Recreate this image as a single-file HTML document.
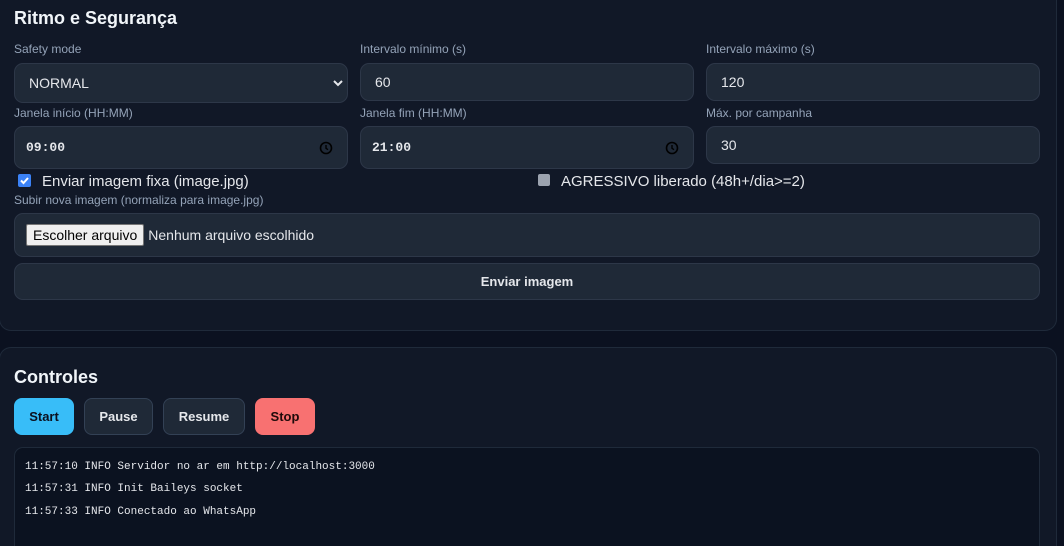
<!DOCTYPE html>
<html style="width:1064px;height:546px;overflow:hidden"><head><meta charset="utf-8"><style>
*{box-sizing:border-box;margin:0;padding:0}
body{width:1064px;height:546px;overflow:hidden;background:#0b1120;font-family:"Liberation Sans",sans-serif;color:#e5e7eb;position:relative}
.card{position:absolute;left:-1px;width:1058px;background:#111827;border:1px solid #1f2a3a;border-radius:12px}
.a{position:absolute}
.lbl{font-size:12px;color:#94a3b8}
.inp{position:absolute;background:#1f2937;border:1px solid #2d3748;border-radius:9px;font-size:14px;color:#e5e7eb;display:flex;align-items:center;padding-left:14px}
h2{position:absolute;font-size:18px;font-weight:bold;color:#f1f5f9}
.btn{position:absolute;top:398px;height:37px;border-radius:8px;font-size:13px;font-weight:bold;display:flex;align-items:center;justify-content:center;background:#1f2937;border:1px solid #334155;color:#e5e7eb}
.log{font-family:"Liberation Mono","DejaVu Sans Mono",monospace;font-size:11px;color:#e5e7eb}
</style></head><body>
<div class="card" style="top:-20px;height:351px"></div>
<div class="card" style="top:347px;height:199px;border-bottom:none;border-bottom-left-radius:0;border-bottom-right-radius:0"></div>
<h2 style="left:14px;top:8px">Ritmo e Segurança</h2>
<div class="a lbl" style="left:14px;top:42px">Safety mode</div>
<div class="a lbl" style="left:360px;top:42px">Intervalo mínimo (s)</div>
<div class="a lbl" style="left:706px;top:42px">Intervalo máximo (s)</div>
<div class="inp" style="left:14px;top:63px;width:334px;height:40px">NORMAL
<svg class="a" style="right:4px;top:15px" width="10" height="8" viewBox="0 0 10 8"><path d="M1 2l4 4 4-4" stroke="#e5e7eb" stroke-width="2" fill="none"/></svg></div>
<div class="inp" style="left:360px;top:63px;width:334px;height:38px">60</div>
<div class="inp" style="left:706px;top:63px;width:334px;height:38px">120</div>
<div class="a lbl" style="left:14px;top:106px">Janela início (HH:MM)</div>
<div class="a lbl" style="left:360px;top:106px">Janela fim (HH:MM)</div>
<div class="a lbl" style="left:706px;top:106px">Máx. por campanha</div>
<div class="inp log" style="left:14px;top:126px;width:334px;height:43px;font-size:13px;font-weight:bold;padding-left:11px">09:00
<svg class="a" style="right:14px;top:14px" width="14" height="14" viewBox="0 0 14 14"><circle cx="7" cy="7" r="5.5" stroke="#000" stroke-width="1.6" fill="none"/><path d="M7 4v3.3l2 1.4" stroke="#000" stroke-width="1.4" fill="none"/></svg></div>
<div class="inp log" style="left:360px;top:126px;width:334px;height:43px;font-size:13px;font-weight:bold;padding-left:11px">21:00
<svg class="a" style="right:14px;top:14px" width="14" height="14" viewBox="0 0 14 14"><circle cx="7" cy="7" r="5.5" stroke="#000" stroke-width="1.6" fill="none"/><path d="M7 4v3.3l2 1.4" stroke="#000" stroke-width="1.4" fill="none"/></svg></div>
<div class="inp" style="left:706px;top:126px;width:334px;height:38px">30</div>
<div class="a" style="left:18px;top:174px;width:13px;height:13px;background:#3b82f6;border-radius:2px"><svg width="13" height="13" viewBox="0 0 13 13"><path d="M3 6.5l2.5 2.5 4.5-5" stroke="#fff" stroke-width="2" fill="none"/></svg></div>
<div class="a" style="left:42px;top:173px;font-size:15px;color:#e5e7eb">Enviar imagem fixa (image.jpg)</div>
<div class="a" style="left:538px;top:174px;width:12px;height:12px;background:#9ca3af;border-radius:2px"></div>
<div class="a" style="left:561px;top:173px;font-size:15px;color:#e5e7eb">AGRESSIVO liberado (48h+/dia>=2)</div>
<div class="a lbl" style="left:14px;top:193px">Subir nova imagem (normaliza para image.jpg)</div>
<div class="inp" style="left:14px;top:213px;width:1026px;height:44px;padding-left:11px"><span style="background:#efefef;color:#000;border:1px solid #767676;border-radius:2px;padding:2px 6px;font-size:14px;margin-right:4px">Escolher arquivo</span>Nenhum arquivo escolhido</div>
<div class="inp" style="left:14px;top:263px;width:1026px;height:37px;justify-content:center;padding:0;font-size:13px;font-weight:bold">Enviar imagem</div>
<h2 style="left:14px;top:367px">Controles</h2>
<div class="btn" style="left:14px;width:60px;background:#38bdf8;border-color:#38bdf8;color:#0b1120">Start</div>
<div class="btn" style="left:84px;width:69px">Pause</div>
<div class="btn" style="left:163px;width:82px">Resume</div>
<div class="btn" style="left:255px;width:60px;background:#f87171;border-color:#f87171;color:#1f0a0a">Stop</div>
<div class="a" style="left:14px;top:447px;width:1026px;height:99px;background:#0b1220;border:1px solid #1f2a3a;border-bottom:none;border-radius:9px 9px 0 0"></div>
<div class="a log" style="left:25px;top:461px">11:57:10 INFO Servidor no ar em http://localhost:3000</div>
<div class="a log" style="left:25px;top:483px">11:57:31 INFO Init Baileys socket</div>
<div class="a log" style="left:25px;top:506px">11:57:33 INFO Conectado ao WhatsApp</div>
</body></html>
